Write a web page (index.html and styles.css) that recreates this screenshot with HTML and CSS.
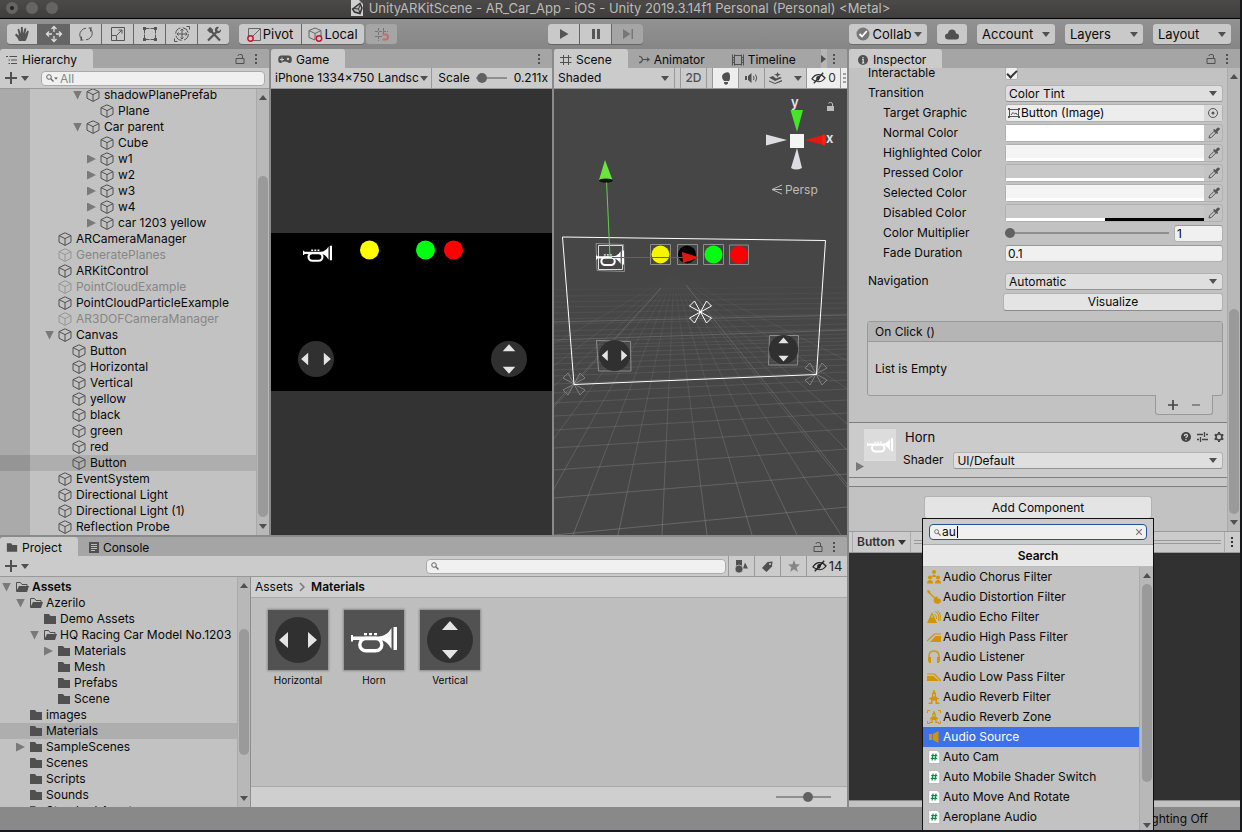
FILE: index.html
```html
<!DOCTYPE html>
<html lang="en">
<head>
<meta charset="utf-8">
<title>UnityARKitScene - AR_Car_App</title>
<link rel="stylesheet" href="styles.css">
</head>
<body>
<svg class="defs" aria-hidden="true">
  <symbol id="cube" viewBox="0 0 14 14"><path d="M7 .8 13 3.6V10.2L7 13.4 1 10.2V3.6zM1 3.6 7 6.600 13 3.6M7 6.600V13.4" fill="none" stroke="currentColor"/></symbol>
  <symbol id="folder" viewBox="0 0 14 12"><path d="M1 1h5l1.500 2H13v8H1z" fill="currentColor"/></symbol>
  <symbol id="folder-open" viewBox="0 0 14 12"><path d="M1.500 10V1.500h4L7 3.500h5V5" fill="none" stroke="currentColor"/><path d="M4 5h10l-2 6H1z" fill="currentColor"/></symbol>
  <symbol id="lock" viewBox="0 0 10 12"><path d="M1 5.500h8v5H1zM7.500 5.500V3q0-1.500-1.500-1.500H4.500Q3 1.500 3 3" fill="none" stroke="currentColor"/></symbol>
  <symbol id="dots" viewBox="0 0 4 12"><path d="M1 1h2v2H1zM1 5h2v2H1zM1 9h2v2H1z" fill="currentColor"/></symbol>
  <symbol id="plus" viewBox="0 0 12 12"><path d="M6 0V12M0 6H12" stroke="currentColor" stroke-width="2"/></symbol>
  <symbol id="down" viewBox="0 0 8 5"><path d="M0 0h8L4 5z" fill="currentColor"/></symbol>
  <symbol id="up" viewBox="0 0 8 5"><path d="M0 5h8L4 0z" fill="currentColor"/></symbol>
  <symbol id="search" viewBox="0 0 8 8"><circle cx="3" cy="3" r="2.300" fill="none" stroke="currentColor"/><path d="M4.800 4.800 7.500 7.500" stroke="currentColor" stroke-width="1.300"/></symbol>
  <symbol id="eye" viewBox="0 0 16 12"><path d="M1 7Q4 2.500 8 2.500T15 6Q12 10 8 10T1 7z" fill="none" stroke="currentColor" stroke-width="1.300"/><path d="M6 8.500Q4.500 4 8 3.800T8 8.800z" fill="currentColor"/><path d="M3 11.500 13 .5" stroke="currentColor" stroke-width="1.500"/></symbol>
  <symbol id="dropper" viewBox="0 0 12 12"><path d="M1 11 1.500 8.800 6 4.300 7.800 6 3.300 10.500z" fill="none" stroke="currentColor"/><path d="M5 3l1.300-1 1.200.9L9 1Q10.200 0 11.400 1T11.200 3L9.300 4.700l.9 1.300-1.200 1z" fill="currentColor"/></symbol>
  <symbol id="trumpet" viewBox="0 0 46 26"><path d="M0 8h2v1.500H28Q36 9 40.500 1V22Q36 14 30 13H2v1.500H0zM42.500 0H46V23H42.500zM13 6h3v2.200h-3zM18 6h3v2.200h-3zM23 6h3v2.200h-3z" fill="currentColor"/><rect x="8.800" y="11.500" width="22" height="12.200" rx="6" fill="none" stroke="currentColor" stroke-width="3.400"/></symbol>
  <symbol id="knob-h" viewBox="0 0 46 46"><circle cx="23" cy="23" r="23" fill="#303030"/><path d="M4 23 13 15V31zM42 23 33 15V31z" fill="#e4e4e4"/></symbol>
  <symbol id="knob-v" viewBox="0 0 46 46"><circle cx="23" cy="23" r="23" fill="#303030"/><path d="M23 4 31 13H15zM23 42 31 33H15z" fill="#e4e4e4"/></symbol>
  <symbol id="flower" viewBox="-12 -12 24 24"><path d="M0 0-11-6-6-11zM0 0 6-11 11-6zM0 0 11 6 6 11zM0 0-6 11-11 6z" fill="none" stroke="currentColor"/></symbol>
  <symbol id="script" viewBox="0 0 14 16"><path d="M1 .5h9.500L13.500 3.500V15.500H1z" fill="#fff" stroke="#999" stroke-width=".6"/><path d="M6 4 4.800 12M9.300 4 8.100 12M3.800 6.500h7M3.300 9.500h7" stroke="#0b8a45" stroke-width="1.300"/></symbol>
  <symbol id="church" viewBox="0 0 14 14"><path d="M6.300 0h1.400v1.300L9 3.500v3l3 2.300-.7 1L10 9v3.500H12.500V14H8.500v-3.500h-3V14h-4V12.500H4V9l-1.300.8-.7-1 3-2.300v-3l1.300-2.200zM6.300 4v2.500h1.400V4z" fill="currentColor" fill-rule="evenodd"/></symbol>
</svg>

<div class="app">
  <header class="titlebar">
    <div class="lights"><span class="light dirty"></span><span class="light"></span><span class="light"></span></div>
    <h1 class="title">
      <svg width="14" height="16" viewBox="0 0 14 16"><path d="M1 0h8l4 4v12H1z" fill="#cfcfcf"/><path d="M2.500 9 10 3.500l2 4.500-2 5.500L4.500 12z" fill="#bbb" stroke="#333" stroke-width="1.500"/><path d="M4 8.500 8.500 9 10.500 4.500M8.500 9 10 13" fill="none" stroke="#333"/></svg>
      UnityARKitScene - AR_Car_App - iOS - Unity 2019.3.14f1 Personal (Personal) &lt;Metal&gt;
    </h1>
  </header>

  <div class="toolbar">
    <div class="group">
      <button class="tool hand" aria-label="Hand"><svg width="16" height="16" viewBox="0 0 16 16"><path d="M5 15Q4 12 1 9L2.200 7.500 5 9.500 3.500 3.300l1.600-.5L6.800 7.500 6.900 1h1.900L9 7.500 10.600 2l1.700.4L11.300 8.300 13.300 4.500l1.500.7Q13.500 12 11.500 15z" fill="currentColor"/></svg></button>
      <button class="tool on" aria-label="Move"><svg width="18" height="18" viewBox="0 0 18 18"><path d="M9 2V7M9 11v5M2 9h5M11 9h5M6.500 4 9 1.500 11.500 4M6.500 14 9 16.500 11.500 14M4 6.500 1.500 9 4 11.500M14 6.500 16.500 9 14 11.500" fill="none" stroke="currentColor" stroke-width="1.300"/></svg></button>
      <button class="tool" aria-label="Rotate"><svg width="16" height="16" viewBox="0 0 16 16"><path d="M3.500 13.500Q0 8.500 3.500 4.500 5 2.500 8 2.200M12.500 2.500Q16 7.500 12.500 11.500 11 13.500 8 13.800M10.500 2h3.500M12.500 2v3.500M5.500 14H2M3.500 14v-3.500" fill="none" stroke="currentColor"/></svg></button>
      <button class="tool" aria-label="Scale"><svg width="14" height="14" viewBox="0 0 14 14"><path d="M.5.5h13v13H.5zM.5 8.500H5.500v5M6 8 11 3M7.500 3H11V6.500" fill="none" stroke="currentColor"/></svg></button>
      <button class="tool" aria-label="Rect"><svg width="16" height="16" viewBox="0 0 16 16"><path d="M2.500 4V12M13.500 4V12M4 2.500H12M4 13.500H12" stroke="currentColor" stroke-dasharray="3.500 1"/><path d="M1 1h3v3H1zM12 1h3v3h-3zM1 12h3v3H1zM12 12h3v3h-3z" fill="currentColor"/></svg></button>
      <button class="tool" aria-label="Transform"><svg width="16" height="16" viewBox="0 0 16 16"><circle cx="8" cy="8" r="6.300" fill="none" stroke="currentColor" stroke-dasharray="7.500 2.400"/><path d="M8 3v10M3 8h10M6.500 4.500 8 3l1.500 1.500M6.500 11.500 8 13l1.500-1.500M4.500 6.500 3 8l1.500 1.500M11.500 6.500 13 8l-1.500 1.500M12.500.5h3v3M3.500 15.500h-3v-3" fill="none" stroke="currentColor"/></svg></button>
      <button class="tool" aria-label="Custom tools"><svg width="16" height="16" viewBox="0 0 16 16"><path d="M2 14.500 10.500 6M14 14.500 5 5" stroke="currentColor" stroke-width="2.200"/><path d="M1 4 4 1 7 3.500 6.500 6.500 4 7z" fill="currentColor"/><path d="M13 1Q9 0 8.800 4.500 10 7.500 12 7.300 15.500 6.500 15 3.300L12.800 5.300 11 4z" fill="currentColor"/></svg></button>
    </div>
    <div class="group pivots">
      <button class="tool wide"><svg width="15" height="15" viewBox="0 0 15 15"><path d="M1.500 9V1.500H13.500V13.500H6M5 10 13 2" fill="none" stroke="#666"/><circle cx="3.500" cy="11.500" r="2.700" fill="none" stroke="#c8102a" stroke-width="1.400"/></svg>Pivot</button>
      <button class="tool wide"><svg width="15" height="15" viewBox="0 0 15 15"><path d="M7 13 1 10.500V3.500L7 1l6 2.500V9M1 3.500 7 6.500 13 3.500M7 6.500V13" fill="none" stroke="#666"/><circle cx="11" cy="11.500" r="2.700" fill="none" stroke="#c8102a" stroke-width="1.400"/></svg>Local</button>
    </div>
    <button class="tool snap" disabled aria-label="Grid snapping"><svg width="16" height="15" viewBox="0 0 16 15"><path d="M4.500 1V14M9.500 1V7M1 4.500H14M1 9.500H8" stroke="#777" stroke-dasharray="3 1"/><path d="M8.500 7.500h3q2.500 0 2.500 2.500t-2.500 2.500h-3" fill="none" stroke="#c46c6c" stroke-width="2"/></svg></button>
    <span class="space-a"></span>
    <div class="group">
      <button class="tool" aria-label="Play"><svg width="10" height="12" viewBox="0 0 10 12"><path d="M1 1 9.500 6 1 11z" fill="currentColor"/></svg></button>
      <button class="tool" aria-label="Pause"><svg width="10" height="12" viewBox="0 0 10 12"><path d="M1 1h3v10H1zM6 1h3v10H6z" fill="currentColor"/></svg></button>
      <button class="tool" disabled aria-label="Step"><svg width="12" height="12" viewBox="0 0 12 12"><path d="M1 1 8.500 6 1 11zM9.500 1H11v10H9.500z" fill="currentColor"/></svg></button>
    </div>
    <span class="space-b"></span>
    <button class="drop collab"><svg width="14" height="14" viewBox="0 0 14 14"><circle cx="7" cy="7" r="6.500" fill="#777"/><path d="M3.500 7 6 9.500 10.800 4" fill="none" stroke="#fff" stroke-width="1.800"/></svg><span>Collab</span><svg width="8" height="5"><use href="#down"/></svg></button>
    <button class="drop cloud" aria-label="Services"><svg width="14" height="11" viewBox="0 0 14 11"><path d="M3.500 10.500Q0 10.500 0 7.500T3 4.500Q3.500.5 7 .5T11 4.500Q14 4.700 14 7.500T11 10.500z" fill="currentColor"/></svg></button>
    <button class="drop"><span>Account</span><svg width="8" height="5"><use href="#down"/></svg></button>
    <button class="drop"><span>Layers</span><svg width="8" height="5"><use href="#down"/></svg></button>
    <button class="drop"><span>Layout</span><svg width="8" height="5"><use href="#down"/></svg></button>
  </div>

  <main class="main">
    <div class="left">
      <div class="top">
        <section class="panel hierarchy">
          <div class="tabs"><button class="tab on"><svg width="12" height="10" viewBox="0 0 12 10"><path d="M3.500 1.500H11M5 5H11M5 8.500H11M0 1.500h2M2.500 5h1.500M2.500 8.500h1.500" stroke="currentColor"/></svg>Hierarchy</button><span class="grow"></span><svg width="10" height="12"><use href="#lock"/></svg><svg width="4" height="12"><use href="#dots"/></svg></div>
          <div class="bar"><button class="add" aria-label="Create"><svg width="12" height="12"><use href="#plus"/></svg><svg width="8" height="5"><use href="#down"/></svg></button>
            <label class="search"><svg width="8" height="8"><use href="#search"/></svg><svg width="4" height="3" viewBox="0 0 8 5"><use href="#down"/></svg><input type="search" placeholder="All" aria-label="Search hierarchy"></label></div>
          <div class="scroller">
            <ul class="tree hier">
              <li class="d2"><i class="open"></i><svg><use href="#cube"/></svg>shadowPlanePrefab</li>
              <li class="d3"><i></i><svg><use href="#cube"/></svg>Plane</li>
              <li class="d2"><i class="open"></i><svg><use href="#cube"/></svg>Car parent</li>
              <li class="d3"><i></i><svg><use href="#cube"/></svg>Cube</li>
              <li class="d3"><i class="shut"></i><svg><use href="#cube"/></svg>w1</li>
              <li class="d3"><i class="shut"></i><svg><use href="#cube"/></svg>w2</li>
              <li class="d3"><i class="shut"></i><svg><use href="#cube"/></svg>w3</li>
              <li class="d3"><i class="shut"></i><svg><use href="#cube"/></svg>w4</li>
              <li class="d3"><i class="shut"></i><svg><use href="#cube"/></svg>car 1203 yellow</li>
              <li class="d0"><i></i><svg><use href="#cube"/></svg>ARCameraManager</li>
              <li class="d0 off"><i></i><svg><use href="#cube"/></svg>GeneratePlanes</li>
              <li class="d0"><i></i><svg><use href="#cube"/></svg>ARKitControl</li>
              <li class="d0 off"><i></i><svg><use href="#cube"/></svg>PointCloudExample</li>
              <li class="d0"><i></i><svg><use href="#cube"/></svg>PointCloudParticleExample</li>
              <li class="d0 off"><i></i><svg><use href="#cube"/></svg>AR3DOFCameraManager</li>
              <li class="d0"><i class="open"></i><svg><use href="#cube"/></svg>Canvas</li>
              <li class="d1"><i></i><svg><use href="#cube"/></svg>Button</li>
              <li class="d1"><i></i><svg><use href="#cube"/></svg>Horizontal</li>
              <li class="d1"><i></i><svg><use href="#cube"/></svg>Vertical</li>
              <li class="d1"><i></i><svg><use href="#cube"/></svg>yellow</li>
              <li class="d1"><i></i><svg><use href="#cube"/></svg>black</li>
              <li class="d1"><i></i><svg><use href="#cube"/></svg>green</li>
              <li class="d1"><i></i><svg><use href="#cube"/></svg>red</li>
              <li class="d1 sel"><i></i><svg><use href="#cube"/></svg>Button</li>
              <li class="d0"><i></i><svg><use href="#cube"/></svg>EventSystem</li>
              <li class="d0"><i></i><svg><use href="#cube"/></svg>Directional Light</li>
              <li class="d0"><i></i><svg><use href="#cube"/></svg>Directional Light (1)</li>
              <li class="d0"><i></i><svg><use href="#cube"/></svg>Reflection Probe</li>
            </ul>
            <div class="vbar"><svg width="8" height="5"><use href="#up"/></svg><div class="track hier-track"><b></b></div><svg width="8" height="5"><use href="#down"/></svg></div>
          </div>
        </section>

        <section class="panel game">
          <div class="tabs"><button class="tab on"><svg width="14" height="9" viewBox="0 0 14 9"><path d="M3.500.5h7Q13.800.5 13.800 4.500T11 8Q9.500 6.500 7 6.500T3 8Q.2 8.500.2 4.500T3.500.5z" fill="currentColor"/><path d="M4 2.500v4M2 4.500h4" stroke="#cbcbcb"/><circle cx="10" cy="4" r="1.200" fill="#cbcbcb"/></svg>Game</button><span class="grow"></span><svg width="4" height="12"><use href="#dots"/></svg></div>
          <div class="bar">
            <div class="pick aspect"><select aria-label="Aspect"><option>iPhone 1334x750 Landscape</option></select></div>
            <label class="scale">Scale <input type="range" min="0" max="100" value="8"></label><span class="amount">0.211x</span>
          </div>
          <svg class="view" viewBox="271 89 281 446" preserveAspectRatio="xMidYMid slice">
            <rect x="0" y="0" width="900" height="900" fill="#333"/><rect x="0" y="233" width="900" height="158" fill="#000"/>
            <circle cx="369.500" cy="250" r="9.500" fill="#ff0"/><circle cx="425.500" cy="250" r="9.500" fill="#0f1"/><circle cx="453.500" cy="250" r="9.500" fill="#f00"/>
            <use href="#trumpet" x="303" y="245" width="29" height="18" color="#fff"/>
            <use href="#knob-h" x="298" y="341" width="36" height="36"/><use href="#knob-v" x="491" y="341" width="36" height="36"/>
          </svg>
        </section>

        <section class="panel scene">
          <div class="tabs"><button class="tab on"><svg width="12" height="12" viewBox="0 0 12 12"><path d="M3.500 1V11M8.500 1V11M0 3.500H11.500M0 8.500H11.500" stroke="currentColor"/></svg>Scene</button><button class="tab"><svg width="11" height="9" viewBox="0 0 12 9"><path d="M0 1Q3 1 4 4.500 3 8 0 8M4 4.500H10.500M8.500 2.500 11 4.500 8.500 6.500" fill="none" stroke="currentColor" stroke-width="1.200"/></svg>Animator</button><button class="tab"><svg width="12" height="12" viewBox="0 0 12 12"><path d="M.5.5V11.500M11.500.5V11.500M2.500.5V11.500M9.500.5V11.500M2.500 1.500h7M2.500 10.500h7M0 3.500h3M0 6h3M0 8.500h3M9 3.500h3M9 6h3M9 8.500h3" stroke="currentColor"/></svg>Timeline</button><span class="grow"></span><button class="more" aria-label="More tabs"><svg width="5" height="8" viewBox="0 0 5 8"><path d="M0 0 5 4 0 8z" fill="currentColor"/></svg></button><svg width="4" height="12"><use href="#dots"/></svg></div>
          <div class="bar scenebar">
            <div class="pick shade"><select aria-label="Draw mode"><option>Shaded</option></select></div>
            <button class="cell two">2D</button>
            <button class="cell lit" aria-label="Lighting"><svg width="10" height="13" viewBox="0 0 10 13"><path d="M3 9Q1 7 1 4.500T5 .5 9 4.500 7 9zM3 10h4v1.500L5 13 3 11.500z" fill="currentColor"/></svg></button>
            <button class="cell" aria-label="Audio"><svg width="13" height="10" viewBox="0 0 13 10"><path d="M0 3h2v4H0zM3 3 6.500 0V10L3 7z" fill="currentColor"/><path d="M8.500 3Q9.500 5 8.500 7M10.500 1.500Q13 5 10.500 8.500" fill="none" stroke="currentColor"/></svg></button>
            <button class="cell fx" aria-label="Effects"><svg width="13" height="12" viewBox="0 0 13 12"><path d="M0 5.500 4 4 7 6.500 11 5 13 6 6 9zM0 8.500 6 11 13 8v1.500L6 12 0 9.500zM8.500 0 9.500 2 12 2.500 9.500 3.500 8.500 5.500 7.500 3.500 5 2.500 7.500 2z" fill="currentColor"/></svg><svg width="8" height="5"><use href="#down"/></svg></button>
            <button class="cell lit hid"><svg width="15" height="12"><use href="#eye"/></svg>0</button>
            <button class="cell lit grid" aria-label="Grid"><svg width="3" height="10" viewBox="0 0 3 10"><path d="M0 1h3M0 5h3M0 9h3" stroke="currentColor"/></svg></button>
          </div>
          <svg class="view" viewBox="554 89 293 446" preserveAspectRatio="xMidYMid slice">
            <defs><linearGradient id="fade" x1="0" y1="275" x2="0" y2="535" gradientUnits="userSpaceOnUse"><stop offset="0" stop-color="#999" stop-opacity="0"/><stop offset=".1" stop-color="#999" stop-opacity=".1"/><stop offset=".4" stop-color="#999" stop-opacity=".18"/><stop offset="1" stop-color="#999" stop-opacity=".4"/></linearGradient></defs>
            <rect x="0" y="0" width="1600" height="900" fill="#464646"/>
            <path fill="none" stroke="url(#fade)" d="M554 535 847 507M554 498 847 474M554 470 847 449M554 448 847 429M554 430 847 413M554 416 847 400M554 403 847 389M554 393 847 380M554 384 847 372M554 376 847 365M554 370 847 359M554 364 847 354M554 358 847 349M554 354 847 345M554 349 847 341M554 346 847 338M554 342 847 334M554 336 847 329M554 331 847 324M554 324 847 318M554 319 847 314M554 313 847 308M554 307 847 303M554 302 847 298M554 296 847 293M554 290 847 287"/>
            <path fill="none" stroke="url(#fade)" d="M674 275 573 535M674 275 618 535M674 275 662 535M674 275 707 535M674 275 752 535M674 275 797 535M674 275 841 535M674 275 886 535M674 275 931 535M674 275 976 535M674 275 1070 535M674 275 1200 535M674 275 528 535M674 275 483 535M674 275 438 535M674 275 393 535M674 275 330 535M674 275 220 535"/>
            <path d="M686 285 847 484M661 288 554 405M554 322 847 315M554 340 847 330" stroke="#777" opacity=".6"/>
            <g color="#808080"><use href="#flower" x="562" y="372" width="24" height="24"/><use href="#flower" x="804" y="362" width="24" height="24"/></g>
            <path d="M562.500 237 825.500 240.500 816.500 374.500 574 384.500z" fill="none" stroke="#fff"/>
            <use href="#flower" x="688" y="300" width="25" height="24" color="#fff"/>
            <g fill="none" stroke="#8d8d8d"><path d="M650.500 244.500h20v20h-20zM677.500 244.500h20v20h-20zM703.500 244.500h20v20h-20zM729.500 245h19v19.500h-19zM596 243.500 623.500 244.500 624.500 271.500 597 270.500zM596.500 340.500 630.500 341.500 631 371H598.500zM769.500 335.500 798.500 335.500 797.500 365H768.500z"/><path d="M598.500 245.500h24v24h-24z" stroke="#ddd"/></g>
            <circle cx="660.500" cy="254.500" r="9" fill="#f5f500"/><circle cx="687" cy="254.500" r="9" fill="#000"/><circle cx="713.500" cy="254.500" r="9" fill="#0f1"/><circle cx="739" cy="255" r="9" fill="#f00"/>
            <use href="#knob-h" x="598" y="340" width="33" height="31"/><use href="#knob-v" x="769" y="335" width="29" height="29"/>
            <use href="#trumpet" x="596" y="250" width="28" height="17" color="#fff"/>
            <path d="M606.500 180 610 257" stroke="#6c5"/><path d="M612 257.500H690" stroke="#d33818"/>
            <path d="M682 252 699.500 257.500 683 263z" fill="#e01810"/>
            <path d="M605 160 612.500 180H599z" fill="#6be63e"/><ellipse cx="606" cy="180.500" rx="7" ry="2" fill="#081400"/>
            <path d="M790.500 110h12.500L797 132z" fill="#45e32a"/><path d="M825 134.500V145.500L805 140z" fill="#e41810"/><ellipse cx="824" cy="140" rx="2" ry="5.500" fill="#ff2010"/><path d="M766 134.500V145.500L787 140zM791 168 797 148 802 168Q796 171 791 168z" fill="#dcdce2"/><path d="M790 134h14v14h-14z" fill="#f4f4f4"/>
            <g fill="#e5e5e5" class="axis"><text x="791" y="107">y</text><text x="826" y="143">x</text></g>
            <path d="M827 106h7v5h-7z" fill="#bbb"/><path d="M832.500 106v-2q0-1.500-2-1.500t-2 1M782 185 772 189.500 782 194M772 189.500H782" fill="none" stroke="#bbb"/>
            <text x="785" y="194" fill="#bbb" class="persp">Persp</text>
          </svg>
        </section>
      </div>

      <section class="panel project">
        <div class="tabs"><button class="tab on"><svg width="12" height="11" viewBox="0 0 14 12"><use href="#folder"/></svg>Project</button><button class="tab"><svg width="10" height="11" viewBox="0 0 10 11"><path d="M0 0h10v11H0z" fill="#505050"/><path d="M2 2.500h6M2 4.500h6M2 6.500h6M2 8.500h4" stroke="#bbb"/></svg>Console</button><span class="grow"></span><svg width="10" height="12"><use href="#lock"/></svg><svg width="4" height="12"><use href="#dots"/></svg></div>
        <div class="bar"><button class="add" aria-label="Create asset"><svg width="12" height="12"><use href="#plus"/></svg><svg width="8" height="5"><use href="#down"/></svg></button><span class="grow"></span>
          <label class="search assets"><svg width="8" height="8"><use href="#search"/></svg><input type="search" aria-label="Search assets"></label>
          <button class="cell" aria-label="Filter by type"><svg width="13" height="13" viewBox="0 0 13 13"><path d="M1 0h6v6H1zM10 2.500 13 8.500H8z" fill="currentColor"/><circle cx="4" cy="9" r="4" fill="currentColor" stroke="#cbcbcb" stroke-width=".7"/></svg></button>
          <button class="cell" aria-label="Filter by label"><svg width="11" height="11" viewBox="0 0 11 11"><path d="M0 7 5.500 1 10.500.5 10 5.500 4.500 11z" fill="currentColor"/><circle cx="8" cy="3" r="1" fill="#cbcbcb"/></svg></button>
          <button class="cell star" aria-label="Save search"><svg width="12" height="12" viewBox="0 0 12 12"><path d="M6 0 7.600 4.200 12 4.500 8.600 7.300 9.800 12 6 9.300 2.200 12 3.400 7.300 0 4.500 4.400 4.200z" fill="currentColor"/></svg></button>
          <button class="cell count"><svg width="15" height="12"><use href="#eye"/></svg>14</button>
        </div>
        <div class="browser">
          <div class="scroller folders">
            <ul class="tree proj">
              <li class="p0 bold"><i class="open"></i><svg><use href="#folder-open"/></svg>Assets</li>
              <li class="p1"><i class="open"></i><svg><use href="#folder-open"/></svg>Azerilo</li>
              <li class="p2"><i></i><svg><use href="#folder"/></svg>Demo Assets</li>
              <li class="p2"><i class="open"></i><svg><use href="#folder-open"/></svg>HQ Racing Car Model No.1203</li>
              <li class="p3"><i class="shut"></i><svg><use href="#folder"/></svg>Materials</li>
              <li class="p3"><i></i><svg><use href="#folder"/></svg>Mesh</li>
              <li class="p3"><i></i><svg><use href="#folder"/></svg>Prefabs</li>
              <li class="p3"><i></i><svg><use href="#folder"/></svg>Scene</li>
              <li class="p1"><i></i><svg><use href="#folder"/></svg>images</li>
              <li class="p1 sel"><i></i><svg><use href="#folder"/></svg>Materials</li>
              <li class="p1"><i class="shut"></i><svg><use href="#folder"/></svg>SampleScenes</li>
              <li class="p1"><i></i><svg><use href="#folder"/></svg>Scenes</li>
              <li class="p1"><i></i><svg><use href="#folder"/></svg>Scripts</li>
              <li class="p1"><i></i><svg><use href="#folder"/></svg>Sounds</li>
              <li class="p1"><i class="shut"></i><svg><use href="#folder"/></svg>Standard Assets</li>
            </ul>
            <div class="vbar"><svg width="8" height="5"><use href="#up"/></svg><div class="track proj-track"><b></b></div><svg width="8" height="5"><use href="#down"/></svg></div>
          </div>
          <div class="content">
            <nav class="crumbs"><a href="#assets">Assets</a><svg width="6" height="10" viewBox="0 0 6 10"><path d="M1 1 5 5 1 9" fill="none" stroke="#777" stroke-width="1.500"/></svg><a href="#materials" class="bold">Materials</a></nav>
            <div class="thumbs">
              <figure><div class="thumb"><svg width="46" height="46"><use href="#knob-h"/></svg></div><figcaption>Horizontal</figcaption></figure>
              <figure><div class="thumb white"><svg width="46" height="26"><use href="#trumpet"/></svg></div><figcaption>Horn</figcaption></figure>
              <figure><div class="thumb"><svg width="46" height="46"><use href="#knob-v"/></svg></div><figcaption>Vertical</figcaption></figure>
            </div>
            <div class="foot"><input type="range" class="zoom" min="0" max="100" value="60" aria-label="Thumbnail size"></div>
          </div>
        </div>
      </section>
    </div>

    <section class="panel inspector">
      <div class="tabs"><button class="tab on"><svg width="10" height="10" viewBox="0 0 10 10"><circle cx="5" cy="5" r="5" fill="currentColor"/><path d="M5 2v1.500M4 4.500h1.200V8M3.800 8h2.500" fill="none" stroke="#ddd" stroke-width="1.200"/></svg>Inspector</button><span class="grow"></span><svg width="10" height="12"><use href="#lock"/></svg><svg width="4" height="12"><use href="#dots"/></svg></div>
      <div class="scroller">
        <div class="inspect">
          <div class="form">
            <label for="inter">Interactable</label><div class="field"><input type="checkbox" id="inter" checked></div>
            <label for="trans">Transition</label><div class="field pick box"><select id="trans"><option>Color Tint</option></select></div>
            <label class="in" for="target">Target Graphic</label><button class="field obj" id="target"><svg width="12" height="10" viewBox="0 0 12 10"><path d="M1.500 1.500h9v7h-9zM3 7l2-2.500L6.500 6 8 5l1.500 2" fill="none" stroke="#555"/><path d="M0 0h2v2H0zM10 0h2v2h-2zM0 8h2v2H0zM10 8h2v2h-2z" fill="#555"/></svg>Button (Image)<span class="ring"><svg width="10" height="10" viewBox="0 0 10 10"><circle cx="5" cy="5" r="4.500" fill="none" stroke="#555"/><circle cx="5" cy="5" r="1.500" fill="#555"/></svg></span></button>
            <label class="in" for="c1">Normal Color</label><button class="field color" id="c1"><span class="sw pure"></span><svg width="12" height="12"><use href="#dropper"/></svg></button>
            <label class="in" for="c2">Highlighted Color</label><button class="field color" id="c2"><span class="sw pale"></span><svg width="12" height="12"><use href="#dropper"/></svg></button>
            <label class="in" for="c3">Pressed Color</label><button class="field color" id="c3"><span class="sw gray"></span><svg width="12" height="12"><use href="#dropper"/></svg></button>
            <label class="in" for="c4">Selected Color</label><button class="field color" id="c4"><span class="sw pale"></span><svg width="12" height="12"><use href="#dropper"/></svg></button>
            <label class="in" for="c5">Disabled Color</label><button class="field color" id="c5"><span class="sw gray half"></span><svg width="12" height="12"><use href="#dropper"/></svg></button>
            <label class="in" for="mult">Color Multiplier</label><div class="field multi"><input type="range" id="mult" min="1" max="5" value="1"><input type="text" value="1" aria-label="Color Multiplier value"></div>
            <label class="in" for="fadeDur">Fade Duration</label><div class="field"><input type="text" id="fadeDur" value="0.1"></div>
          </div>
          <div class="form nav"><label for="navi">Navigation</label><div class="field pick box"><select id="navi"><option>Automatic</option></select></div></div>
          <div class="visual"><button class="push">Visualize</button></div>
          <div class="event"><div class="event-head">On Click ()</div><div class="event-body">List is Empty</div></div>
          <div class="event-foot"><button aria-label="Add"><svg width="10" height="10" viewBox="0 0 12 12"><use href="#plus"/></svg></button><button aria-label="Remove" disabled><svg width="8" height="2" viewBox="0 0 8 2"><path d="M0 1h8" stroke="currentColor" stroke-width="2"/></svg></button></div>
          <div class="material">
            <i class="shut"></i>
            <div class="swatch"><svg width="26" height="15"><use href="#trumpet"/></svg></div>
            <div class="mat-info">
              <div class="mat-head"><span>Horn</span><span class="grow"></span>
                <svg width="10" height="10" viewBox="0 0 10 10"><circle cx="5" cy="5" r="5" fill="currentColor"/><path d="M3.500 4Q3.500 2.300 5 2.300T6.500 3.900Q6.500 4.600 5 5.400V6M5 7v1.300" fill="none" stroke="#ddd" stroke-width="1.200"/></svg>
                <svg width="11" height="10" viewBox="0 0 11 10"><path d="M0 2.500h6M9 2.500h2M7.500 0v5M0 7.500h2M5 7.500h6M3.500 5v5" stroke="currentColor" stroke-width="1.300"/></svg>
                <svg width="10" height="10" viewBox="0 0 10 10"><circle cx="5" cy="5" r="3" fill="none" stroke="currentColor" stroke-width="1.600"/><path d="M5 0v1.700M5 8.300V10M.7 2.500l1.500.9M7.800 6.600l1.500.9M.7 7.500l1.500-.9M7.800 3.400l1.500-.9" stroke="currentColor" stroke-width="2"/></svg>
              </div>
              <div class="shader"><label for="shader">Shader</label><div class="pick box"><select id="shader"><option>UI/Default</option></select></div></div>
            </div>
          </div>
          <div class="gapline"></div>
          <div class="addwrap"><button class="push addcomp">Add Component</button></div>
        </div>
        <div class="vbar"><svg width="8" height="5"><use href="#up"/></svg><div class="track insp-track"><b></b></div><svg width="8" height="5"><use href="#down"/></svg></div>
      </div>
      <div class="prevbar"><button class="bold">Button <svg width="8" height="5"><use href="#down"/></svg></button><span class="grip"></span><button class="pdots" aria-label="Preview menu"><svg width="4" height="12"><use href="#dots"/></svg></button></div>
      <div class="preview"></div>

      <div class="popup">
        <div class="find"><label><svg width="7" height="7" viewBox="0 0 8 8"><use href="#search"/></svg><input type="text" value="au" size="1" aria-label="Search components"><span class="caret"></span><button aria-label="Clear"><svg width="6" height="6" viewBox="0 0 6 6"><path d="M0 0 6 6M6 0 0 6" stroke="#777" stroke-width="1.200"/></svg></button></label></div>
        <div class="pop-head">Search</div>
        <div class="pop-body">
          <ul class="results">
            <li><svg viewBox="0 0 14 14"><g fill="currentColor"><circle cx="7" cy="2" r="2"/><circle cx="3" cy="7.500" r="2"/><circle cx="11" cy="7.500" r="2"/><path d="M5 7Q5 4.500 7 4.500T9 7zM0 13.500Q0 10 3 10t3 3.500zM8 13.500Q8 10 11 10t3 3.500z"/></g></svg>Audio Chorus Filter</li>
            <li><svg viewBox="0 0 14 14"><path d="M0 0 3 .8 3.500 3 8 7.500 9 6.500 11 7 10.500 8.500 13.500 9 14 12 11 14 7.500 13 6.500 10 7.300 8.500 2.500 4 .8 3z" fill="currentColor"/></svg>Audio Distortion Filter</li>
            <li><svg viewBox="0 0 14 14"><path d="M0 13 5 2 10 13zM5 4.500 4 7.500h2z" fill="currentColor" fill-rule="evenodd"/><path d="M7.500 4Q9.500 5 9.700 9M8 1.500Q13 3 11.500 10.500M10.500.5Q14.500 4 13 11" fill="none" stroke="currentColor"/></svg>Audio Echo Filter</li>
            <li><svg viewBox="0 0 14 14"><path d="M0 11 7.500 4H14" fill="none" stroke="currentColor" stroke-width="1.200"/><path d="M3 12 8.500 6H14v6z" fill="currentColor"/></svg>Audio High Pass Filter</li>
            <li><svg viewBox="0 0 14 14"><path d="M2 10V6.500Q2 1 7 1t5 5.500V10" fill="none" stroke="currentColor" stroke-width="1.400"/><path d="M1 7h3v6H2.500Q1 12 1 10zM13 7h-3v6h1.500Q13 12 13 10z" fill="currentColor"/></svg>Audio Listener</li>
            <li><svg viewBox="0 0 14 14"><path d="M14 11 7.500 4H0" fill="none" stroke="currentColor" stroke-width="1.200"/><path d="M0 6H6.500L12 11H0z" fill="currentColor"/></svg>Audio Low Pass Filter</li>
            <li><svg><use href="#church"/></svg>Audio Reverb Filter</li>
            <li><svg viewBox="0 0 14 14"><use href="#church" x="1" y="1" width="12" height="12"/><path d="M.5 3V.5H3M11 .5h2.500V3M.5 11v2.500H3M11 13.500h2.500V11" fill="none" stroke="currentColor"/></svg>Audio Reverb Zone</li>
            <li class="hot"><svg viewBox="0 0 14 14"><path d="M2 4h3.300v6H2zM6 4 11.500 1V13L6 10z" fill="currentColor"/></svg>Audio Source</li>
            <li><svg><use href="#script"/></svg>Auto Cam</li>
            <li><svg><use href="#script"/></svg>Auto Mobile Shader Switch</li>
            <li><svg><use href="#script"/></svg>Auto Move And Rotate</li>
            <li><svg><use href="#script"/></svg>Aeroplane Audio</li>
            <li><svg><use href="#script"/></svg></li>
          </ul>
          <div class="vbar"><svg width="8" height="5"><use href="#up"/></svg><div class="track pop-track"><b></b></div><svg width="8" height="5"><use href="#down"/></svg></div>
        </div>
      </div>
    </section>
  </main>
  <footer class="status">ghting Off</footer>
</div>
</body>
</html>
```
FILE: styles.css
```css
* { box-sizing: border-box; margin: 0; padding: 0; }
body { background: #1c1c1e; overflow: hidden; font: 12px/16px Inter, "Liberation Sans", sans-serif; color: #090909; }
button, input, select { font: inherit; color: inherit; border: 0; background: none; outline: 0; }
button { white-space: nowrap; }
a { color: inherit; text-decoration: none; }
ul { list-style: none; }
svg { display: block; flex: none; }
.defs { position: absolute; width: 0; height: 0; }
.grow { flex: 1; }
.bold { font-weight: 600; }

.app { display: flex; flex-direction: column; height: 100vh; background: #8a8a8a; border-right: 2px solid #17181c; border-bottom: 2px solid #17181c; overflow: hidden; }
.titlebar { display: flex; align-items: center; height: 19px; flex: none; background: linear-gradient(#4c4a49, #403e3d); border-bottom: 1px solid #000; padding-bottom: 2px; }
.lights { display: flex; gap: 8px; padding-left: 6px; width: 66px; }
.light { width: 12px; height: 12px; border-radius: 50%; background: #656463; }
.dirty { border: 4px solid #656463; background: #222; }
.title { flex: 1; display: flex; justify-content: center; align-items: center; gap: 5px; font-size: 13px; font-weight: 400; color: #bdbbb9; padding-right: 66px; white-space: nowrap; }

.toolbar { display: flex; align-items: center; flex: none; height: 30px; padding: 0 9px 0 7px; background: linear-gradient(#929292, #868686); }
.group { display: flex; gap: 1px; background: #666; border-radius: 3px; box-shadow: 0 1px 0 #666; }
.tool, .drop { display: flex; align-items: center; justify-content: center; height: 20px; background: #c9c9c9; color: #555; }
.tool { width: 31px; }
.tool.hand { width: 30px; }
.tool:first-child { border-radius: 3px 0 0 3px; }
.tool:last-child { border-radius: 0 3px 3px 0; }
.tool.on { background: #656565; color: #dedede; }
.tool.wide { width: 62px; color: #090909; gap: 1px; font-size: 13px; }
.tool:disabled { background: #a5a5a5; color: #777; }
.tool.snap { margin-left: 2px; border-radius: 3px; }
.pivots { margin-left: 10px; }
.space-a { flex: 152; }
.space-b { flex: 207; }
.drop { width: 78px; justify-content: space-between; padding: 0 5px; margin-left: 10px; color: #505050; border-radius: 3px; box-shadow: 0 1px 0 #6c6c6c; font-size: 13px; }
.drop span { color: #090909; }
.drop.collab { margin-left: 0; padding: 0 5px 0 7px; }
.drop.cloud { width: 30px; padding: 0; justify-content: center; }

.main { flex: 1; display: grid; grid-template-columns: 847fr 391fr; gap: 2px; min-height: 0; }
.left { display: flex; flex-direction: column; gap: 2px; min-width: 0; min-height: 0; }
.top { flex: 486; display: grid; grid-template-columns: 269fr 281fr 293fr; gap: 2px; min-height: 0; }
.panel { display: flex; flex-direction: column; min-width: 0; min-height: 0; background: #c2c2c2; overflow: hidden; border-radius: 3px 3px 0 0; }
.project { flex: 270; }
.tabs { display: flex; align-items: center; flex: none; height: 19px; padding-right: 11px; background: #a5a5a5; color: #505050; gap: 9px; }
.tab { display: flex; align-items: center; gap: 4px; height: 19px; padding: 2px 16px 0 11px; margin-right: -9px; color: #090909; white-space: nowrap; }
.tab svg { color: #505050; }
.tab.on { background: #cbcbcb; border-radius: 3px 3px 0 0; padding-left: 6px; }
.inspector .tab.on { padding-left: 9px; gap: 5px; }
.game .tab.on { padding-left: 7px; }
.bar { display: flex; align-items: center; flex: none; height: 21px; background: #cbcbcb; border-bottom: 1px solid #999; }
.add { display: flex; align-items: center; gap: 4px; color: #505050; padding: 0 5px; }
.search { display: flex; flex: 1; align-items: center; height: 15px; margin: 0 4px 0 7px; padding-left: 4px; background: #f0f0f0; border: 1px solid #aaa; border-radius: 4px; color: #666; }
.search input { width: 100%; padding-left: 2px; height: 13px; line-height: 13px; }
.search input::placeholder { color: #888; }
.search.assets { flex: 0 1 300px; margin: 0 2px 0 0; }
.view { flex: 1; width: 100%; min-height: 0; }

.scroller { display: flex; flex: 1; min-height: 0; overflow: hidden; }
.tree { flex: 1; min-width: 0; white-space: nowrap; overflow: hidden; }
.tree li { display: flex; align-items: center; height: 16px; }
.tree li svg { width: 14px; height: 14px; margin-right: 4px; color: #505050; }
.tree i, .material i { width: 9px; height: 9px; margin-right: 4px; flex: none; background: #797979; clip-path: polygon(0 0, 0 0, 0 0); }
i.open { clip-path: polygon(0 0, 100% 0, 50% 100%) !important; }
i.shut { clip-path: polygon(0 0, 100% 50%, 0 100%) !important; }
.hier li { border-left: 30px solid #aaa; }
.hier li:first-child { margin-top: -2px; }
.hier .sel { background: #aeaeae; border-color: #959595; }
.off { color: #868686; }
.tree .off svg { color: #969696; }
.d0 { padding-left: 15px; }
.d1 { padding-left: 29px; }
.d2 { padding-left: 43px; }
.d3 { padding-left: 57px; }
.vbar { display: flex; flex-direction: column; align-items: center; justify-content: space-between; flex: none; width: 13px; padding: 6px 0; background: #b8b8b8; border-left: 1px solid #aaa; color: #505050; }
.track { flex: 1; width: 10px; min-height: 0; }
.track b { display: block; background: #9a9a9a; border-radius: 5px; }
.hier-track { padding-top: 76px; padding-bottom: 7px; }
.hier-track b { height: 100%; }

.pick { position: relative; min-width: 0; }
.pick::after { content: ""; position: absolute; right: 5px; top: 50%; margin-top: -2px; border: 4px solid transparent; border-top: 5px solid #505050; border-bottom: 0; pointer-events: none; }
.pick select { appearance: none; width: 100%; height: 100%; padding: 0 14px 0 4px; overflow: hidden; }
.aspect { flex: 1; height: 20px; border-right: 1px solid #999; }
.aspect::after { right: 3px; }
.aspect select { padding-right: 12px; }
.scale { display: flex; align-items: center; gap: 6px; padding-left: 6px; }
.scale input { width: 31px; }
.amount { padding: 0 4px 0 7px; }
input[type=range] { appearance: none; height: 12px; background: linear-gradient(#8f8f8f, #8f8f8f) center / 100% 2px no-repeat; }
input[type=range]::-webkit-slider-thumb { appearance: none; width: 10px; height: 10px; border-radius: 50%; background: #616161; }
.cell { display: flex; align-items: center; justify-content: center; gap: 2px; height: 20px; width: 26px; flex: none; border-left: 1px solid #999; color: #505050; }
.cell.lit { background: #eee; }
.shade { flex: 1; height: 20px; border-right: 1px solid #999; }
.two { width: 27px; margin: 0 5px; border-right: 1px solid #999; font-weight: 500; }
.fx { width: 42px; gap: 12px; }
.hid { width: 34px; color: #333; }
.grid { width: 7px; }
.more { display: flex; align-items: center; justify-content: center; width: 16px; height: 19px; background: #b5b5b5; margin-right: -4px; }
.star { color: #858585; }
.count { width: 41px; color: #222; font-size: 13px; }
.axis { font: 600 13px Inter, sans-serif; }
.persp { font: 12px Inter, sans-serif; }

.browser { flex: 1; display: grid; grid-template-columns: 250fr 597fr; min-height: 0; }
.proj { padding-top: 2px; }
.proj li { flex: none; }
.proj .sel { background: #aeaeae; }
.proj li svg { height: 12px; margin-right: 3px; }
.p0 { padding-left: 2px; }
.p1 { padding-left: 16px; }
.p2 { padding-left: 30px; }
.p3 { padding-left: 44px; }
.proj-track { padding-top: 41px; }
.proj-track b { height: 126px; }
.content { display: flex; flex-direction: column; min-width: 0; border-left: 1px solid #8f8f8f; background: #bebebe; }
.crumbs { display: flex; align-items: center; gap: 6px; height: 21px; padding-left: 4px; background: #cfcfcf; border-bottom: 1px solid #aaa; }
.thumbs { flex: 1; display: flex; gap: 16px; padding: 12px 17px; }
figure { width: 60px; }
.thumb { display: flex; align-items: center; justify-content: center; height: 60px; background: #525252; box-shadow: 0 0 2px 1px #8b8b8b; }
.white { color: #fff; }
figcaption { font-size: 10px; line-height: 12px; padding-top: 4px; text-align: center; }
.foot { display: flex; align-items: center; justify-content: flex-end; height: 21px; padding-right: 16px; background: #cfcfcf; border-top: 1px solid #aaa; }
.zoom { width: 55px; }

.inspector { position: relative; overflow: visible; }
.inspect { flex: 1; min-width: 0; overflow: hidden; }
.form { display: grid; grid-template-columns: 137px 1fr; grid-auto-rows: 18px; row-gap: 2px; padding: 0 4px 0 19px; margin-top: -4px; align-items: center; }
.form.nav { margin-top: 10px; }
.in { padding-left: 15px; }
.field { display: flex; align-items: center; width: 100%; height: 18px; }
input[type=checkbox] { appearance: none; width: 13px; height: 13px; background: #f0f0f0; border: 1px solid #b0b0b0; border-radius: 2px; }
input[type=checkbox]:checked::after { content: ""; display: block; width: 8px; height: 4px; margin: 2px 1px; border: solid #333; border-width: 0 0 2px 2px; transform: rotate(-45deg); }
.box { height: 17px; background: #dfdfdf; border: 1px solid #b2b2b2; border-bottom-color: #939393; border-radius: 3px; }
.box select { padding-left: 3px; }
.obj { background: #ededed; border: 1px solid #b0b0b0; border-radius: 3px; padding-left: 2px; gap: 1px; }
.ring { display: flex; align-items: center; justify-content: center; margin-left: auto; width: 18px; height: 16px; background: #d8d8d8; }
.color { gap: 4px; background: #c4c4c4; border: 1px solid #b0b0b0; border-radius: 3px; color: #555; padding-right: 2px; }
.sw { flex: 1; height: 16px; border-bottom: 3px solid #fff; }
.pure { background: #fff; }
.pale { background: #f4f4f4; }
.gray { background: #c8c8c8; }
.half { border-image: linear-gradient(90deg, #fff 50%, #000 50%) 3; }
.multi { gap: 5px; }
.multi input[type=range] { flex: 1; min-width: 0; }
input[type=text] { width: 100%; height: 17px; padding-left: 2px; background: #f0f0f0; border: 1px solid #b2b2b2; border-top-color: #999; border-radius: 3px; }
.multi input[type=text] { flex: none; width: 49px; }
.visual { padding: 3px 4px 0 154px; }
.push { display: block; width: 100%; height: 18px; background: #e4e4e4; border: 1px solid #b2b2b2; border-bottom-color: #8c8c8c; border-radius: 3px; }
.event { margin: 10px 4px 0 18px; border: 1px solid #999; border-radius: 3px; background: #c8c8c8; }
.event-head { padding: 1px 7px; height: 20px; line-height: 18px; background: #b5b5b5; border-bottom: 1px solid #999; }
.event-body { height: 53px; line-height: 54px; padding-left: 7px; }
.event-foot { display: flex; justify-content: space-around; width: 58px; height: 20px; margin: -1px 14px 7px auto; padding: 0 5px; background: #c8c8c8; border: 1px solid #999; border-top: 0; border-radius: 0 0 3px 3px; position: relative; color: #444; }
.event-foot button { display: flex; align-items: center; }
.event-foot button:disabled { color: #888; }
.material { display: flex; height: 56px; padding: 6px 3px 0 7px; background: #cbcbcb; border-top: 1px solid #7f7f7f; border-bottom: 1px solid #7f7f7f; }
.material i { align-self: flex-end; margin: 0 0 6px; width: 8px; }
.swatch { display: flex; align-items: center; justify-content: center; width: 32px; height: 32px; background: #dcdcdc; color: #fff; }
.mat-info { flex: 1; min-width: 0; padding-left: 7px; }
.mat-head { display: flex; align-items: center; gap: 6px; height: 16px; padding-left: 2px; color: #444; font-size: 13px; }
.mat-head span:first-child { color: #090909; }
.shader { display: flex; align-items: center; height: 18px; margin-top: 6px; gap: 10px; padding-right: 1px; }
.shader .pick { flex: 1; }
.gapline { height: 9px; border-bottom: 1px solid #7f7f7f; background: #c8c8c8; }
.addwrap { padding: 9px 75px 0; }
.addcomp { height: 23px; }
.insp-track { padding-top: 230px; padding-bottom: 6px; }
.insp-track b { height: 100%; }
.prevbar { display: flex; align-items: center; flex: none; height: 22px; background: #cbcbcb; border-top: 1px solid #999; border-bottom: 1px solid #999; color: #505050; padding-left: 3px; }
.prevbar button { display: flex; align-items: center; gap: 3px; height: 20px; padding: 0 4px; color: #333; border-left: 1px solid #aaa; border-right: 1px solid #aaa; }
.grip { flex: 1; height: 4px; margin: 0 3px; border: solid #999; border-width: 1px 0; }
.prevbar .pdots { width: 16px; padding: 0 5px; border-right: 0; }
.preview { flex: none; height: 248px; background: #313131; border-bottom: 1px solid #888; margin-bottom: 6px; }

.popup { position: absolute; z-index: 2; top: 469px; bottom: -26px; left: 73px; width: 232px; display: flex; flex-direction: column; background: #c2c2c2; border: 1px solid #111; }
.find { flex: none; height: 26px; padding: 5px 6px; background: #cbcbcb; border-bottom: 1px solid #aaa; }
.find label { display: flex; align-items: center; height: 16px; padding: 0 4px 0 4px; background: #f0f0f0; border: 1px solid #1f5596; border-radius: 4px; color: #666; }
.find input[type=text] { width: 16px; height: 14px; padding: 0 0 0 1px; border: 0; color: #090909; background: none; }
.caret { width: 1px; height: 12px; background: #000; }
.find button { margin-left: auto; }
.pop-head { flex: none; height: 22px; line-height: 21px; text-align: center; font-weight: 600; background: #e8e8e8; border-bottom: 1px solid #bbb; }
.pop-body { display: flex; flex: 1; min-height: 0; }
.results { flex: 1; overflow: hidden; }
.results li { display: flex; align-items: center; gap: 2px; height: 20px; padding-left: 4px; white-space: nowrap; }
.results svg { width: 14px; height: 14px; color: #d29400; }
.hot { background: #3e71e9; color: #fff; }
.pop-track { padding-top: 6px; }
.pop-track b { height: 198px; }
.pop-body .vbar { width: 14px; padding-bottom: 4px; }
.status { flex: none; display: flex; align-items: center; justify-content: flex-end; height: 23px; padding-right: 32px; background: #898989; }
```
